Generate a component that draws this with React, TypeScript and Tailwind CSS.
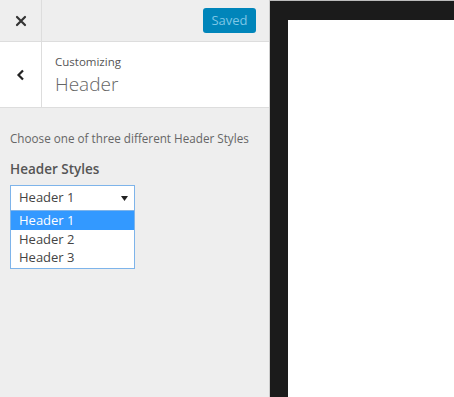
import React from "react";

export default function App() {
  const font = { fontFamily: '"Open Sans", "Noto Sans", sans-serif' };
  return (
    <div className="flex h-[397px] w-[454px] overflow-hidden bg-[#1b1b1b]" style={font}>
      <div className="flex w-[270px] shrink-0 flex-col border-r border-[#ccc] bg-[#eee]">
        <div className="flex h-[42px] items-center border-b border-[#ddd]">
          <div className="flex h-full w-[42px] items-center justify-center border-r border-[#ddd]">
            <svg width="12" height="12" viewBox="0 0 12 12">
              <path d="M2 2 L10 10 M10 2 L2 10" stroke="#333" strokeWidth="2.2" strokeLinecap="round" />
            </svg>
          </div>
          <div className="flex flex-1 justify-end pr-[13px]">
            <div className="flex h-[25px] w-[53px] items-center justify-center rounded-[3px] bg-[#0085ba] text-[13px] text-[#7ec6e6]">
              Saved
            </div>
          </div>
        </div>
        <div className="flex h-[66px] border-b border-[#ddd] bg-white">
          <div className="flex w-[42px] items-center justify-center border-r border-[#ddd]">
            <svg width="10" height="12" viewBox="0 0 10 12">
              <path d="M7 1.5 L2.5 6 L7 10.5" stroke="#222" strokeWidth="2.2" fill="none" />
            </svg>
          </div>
          <div className="flex flex-col justify-center pl-[13px] pt-[3px]">
            <div className="text-[11.5px] leading-[16px] text-[#555]">Customizing</div>
            <div className="text-[19px] font-light leading-[28px] text-[#666]">Header</div>
          </div>
        </div>
        <div className="px-[10px] pt-[21px]">
          <div className="text-[11.7px] leading-[18px] text-[#666]">Choose one of three different Header Styles</div>
          <div className="mt-[13px] text-[13.5px] font-semibold leading-[18px] text-[#555]">Header Styles</div>
          <div className="mt-[7px] w-[125px]">
            <div className="flex h-[26px] items-center justify-between border border-[#7eb4ea] bg-white pl-[8px] pr-[6px] text-[13px] text-[#444]">
              <span>Header 1</span>
              <svg width="7" height="5" viewBox="0 0 7 5">
                <path d="M0 0 L7 0 L3.5 5 Z" fill="#222" />
              </svg>
            </div>
            <div className="border border-t-0 border-[#7eb4ea] bg-white pb-[1px] text-[13px] leading-[18.5px] text-[#444]">
              <div className="bg-[#3399ff] pl-[8px] text-white">Header 1</div>
              <div className="pl-[8px]">Header 2</div>
              <div className="pl-[8px]">Header 3</div>
            </div>
          </div>
        </div>
      </div>
      <div className="flex flex-1 flex-col">
        <div className="h-[1px] bg-[#bbb]" />
        <div className="h-[19px] bg-[#1b1b1b]" />
        <div className="flex flex-1">
          <div className="w-[18px] bg-[#1b1b1b]" />
          <div className="flex-1 bg-white" />
        </div>
      </div>
    </div>
  );
}
